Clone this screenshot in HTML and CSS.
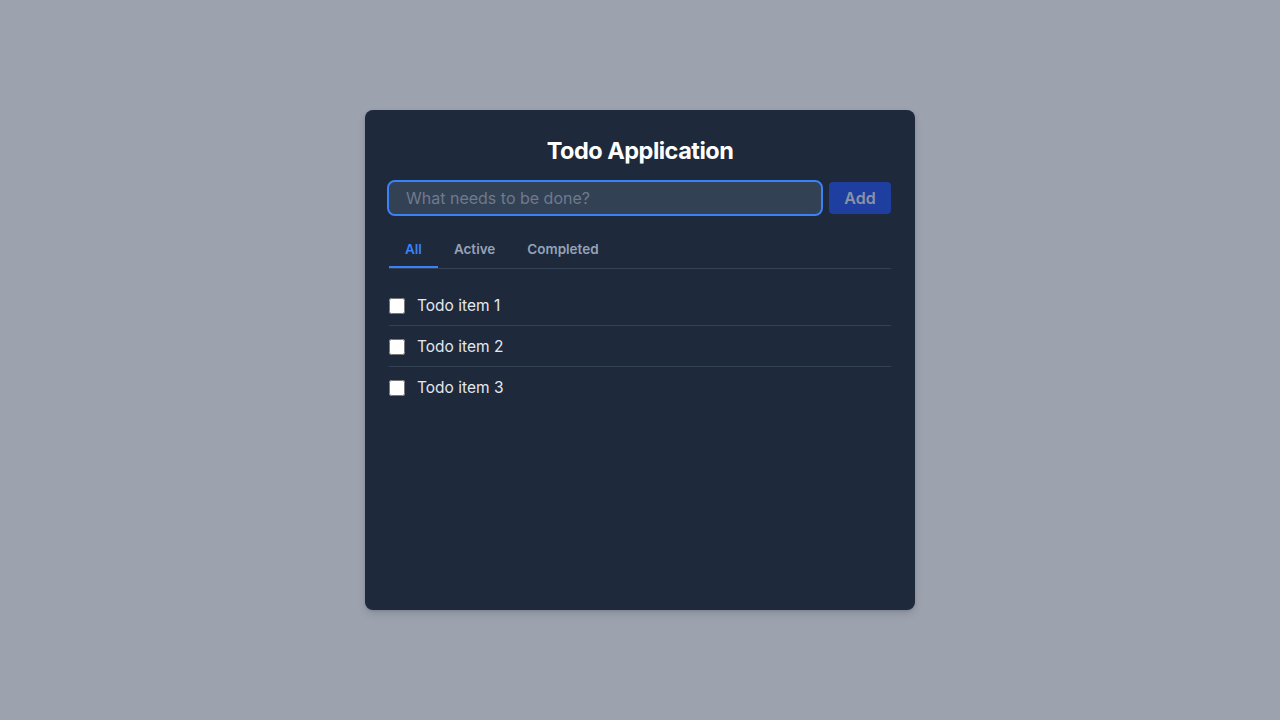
FILE: index.html
```html
<!DOCTYPE html>
<html lang="en">
<head>
<meta charset="utf-8">
<title>Todo Application</title>
<link rel="stylesheet" href="styles.css">
</head>
<body>
<main class="card">
  <h1 class="title">Todo Application</h1>
  <form class="add-row">
    <input class="new-todo" type="text" placeholder="What needs to be done?">
    <button class="add-btn" type="button">Add</button>
  </form>
  <nav class="tabs">
    <button class="tab active" type="button">All</button>
    <button class="tab" type="button">Active</button>
    <button class="tab" type="button">Completed</button>
  </nav>
  <ul class="list">
    <li class="item"><input class="check" type="checkbox"><span class="label">Todo item 1</span></li>
    <li class="item"><input class="check" type="checkbox"><span class="label">Todo item 2</span></li>
    <li class="item"><input class="check" type="checkbox"><span class="label">Todo item 3</span></li>
  </ul>
</main>
</body>
</html>
```
FILE: styles.css
```css
* { box-sizing: border-box; }
html, body { margin: 0; padding: 0; }
body {
  min-height: 100vh;
  background: #9ca3af;
  font-family: Inter, "Noto Sans", sans-serif;
  display: flex;
  align-items: center;
  justify-content: center;
}
.card {
  width: 550px;
  height: 500px;
  background: #1e293b;
  border-radius: 8px;
  padding: 24px;
  box-shadow: 0 4px 8px rgba(0,0,0,0.12), 0 1px 3px rgba(0,0,0,0.1);
}
.title {
  margin: 0 0 16px;
  font-size: 23.5px;
  line-height: 32px;
  letter-spacing: -0.5px;
  font-weight: 700;
  color: #ffffff;
  text-align: center;
  padding-top: 1px;
  height: 32px;
}
.add-row {
  display: flex;
  gap: 8px;
  margin: 0;
}
.new-todo {
  flex: 1;
  height: 32px;
  border: none;
  outline: 2px solid #3b82f6;
  border-radius: 6px;
  background: #334155;
  color: #e2e8f0;
  padding: 0 17px;
  font-family: inherit;
  font-size: 16px;
}
.new-todo::placeholder { color: #6f7a8c; }
.add-btn {
  width: 62px;
  height: 32px;
  border: none;
  border-radius: 4px;
  background: #1e3fa0;
  color: #8a93a5;
  font-family: inherit;
  font-size: 16px;
  font-weight: 600;
  padding: 0;
}
.tabs {
  display: flex;
  margin-top: 16px;
  border-bottom: 1px solid #334155;
}
.tab {
  background: none;
  border: none;
  border-bottom: 2px solid transparent;
  padding: 9px 16px 7px;
  font-family: inherit;
  font-size: 13.5px;
  line-height: 20px;
  font-weight: 600;
  color: #94a3b8;
}
.tab.active {
  color: #3b82f6;
  border-bottom-color: #3b82f6;
}
.list {
  list-style: none;
  margin: 16px 0 0;
  padding: 0;
}
.item {
  display: flex;
  align-items: center;
  gap: 12px;
  padding: 9px 0 7px;
  border-bottom: 1px solid #334155;
}
.item:last-child { border-bottom: none; }
.check {
  width: 16px;
  height: 16px;
  margin: 0;
}
.label {
  font-size: 15.5px;
  line-height: 24px;
  color: #e2e8f0;
}
```
